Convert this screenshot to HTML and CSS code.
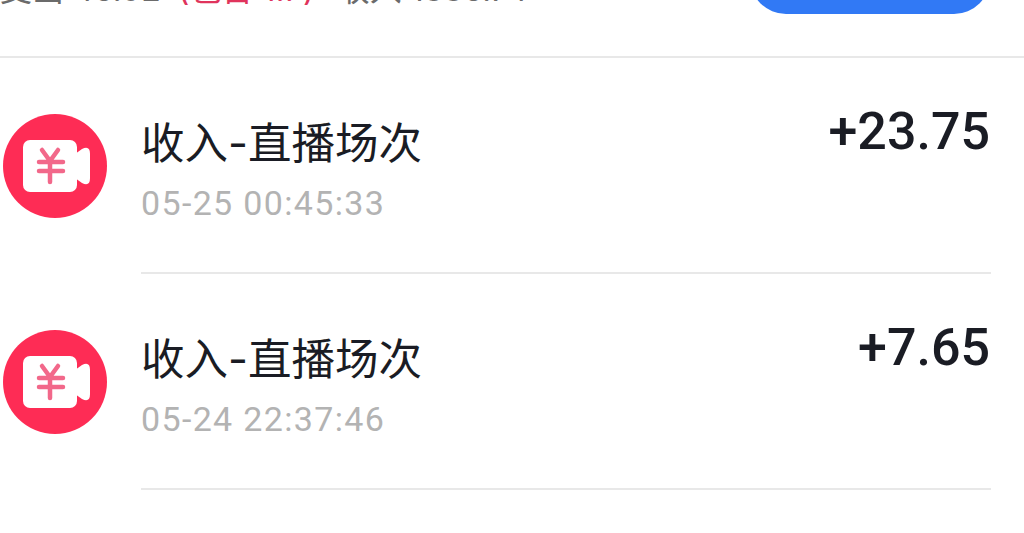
FILE: index.html
```html
<!DOCTYPE html>
<html lang="zh">
<head>
  <meta charset="UTF-8">
  <title>收支明细</title>
  <link rel="stylesheet" href="styles.css">
</head>
<body>

<div class="summary">
  <div class="summary-text">
    <span>支出 46.92</span>
    <span class="refund">(包含 1.. )</span>
    <span class="income">收入 1886.74</span>
  </div>
  <div class="action-btn"></div>
</div>

<div class="record">
  <div class="record-icon">
    <svg width="104" height="104" viewBox="0 0 104 104">
      <circle cx="52" cy="52" r="52" fill="#fe2c55"/>
      <rect x="20" y="26" width="54" height="52" rx="7" fill="#fff"/>
      <path d="M72 40l7-5q8-4 8 5v24q0 9-8 5l-7-5z" fill="#fff"/>
      <path d="M39 36l8 11 8-11M36 48h24M36 57h24M47 48v20" fill="none" stroke="#f2688a" stroke-width="4.5" stroke-linecap="round" stroke-linejoin="round"/>
    </svg>
  </div>
  <div class="record-body">
    <div class="record-info">
      <div class="record-title">收入-直播场次</div>
      <div class="record-time">05-25 00:45:33</div>
    </div>
    <div class="record-amount">+23.75</div>
  </div>
</div>

<div class="record">
  <div class="record-icon">
    <svg width="104" height="104" viewBox="0 0 104 104">
      <circle cx="52" cy="52" r="52" fill="#fe2c55"/>
      <rect x="20" y="26" width="54" height="52" rx="7" fill="#fff"/>
      <path d="M72 40l7-5q8-4 8 5v24q0 9-8 5l-7-5z" fill="#fff"/>
      <path d="M39 36l8 11 8-11M36 48h24M36 57h24M47 48v20" fill="none" stroke="#f2688a" stroke-width="4.5" stroke-linecap="round" stroke-linejoin="round"/>
    </svg>
  </div>
  <div class="record-body">
    <div class="record-info">
      <div class="record-title">收入-直播场次</div>
      <div class="record-time">05-24 22:37:46</div>
    </div>
    <div class="record-amount">+7.65</div>
  </div>
</div>

</body>
</html>
```

FILE: styles.css
```css
* {
  box-sizing: border-box;
  font-family: 'Inter', 'Noto Sans CJK SC', sans-serif;
}

html, body {
  height: 533px;
  overflow: hidden;
}

body {
  margin: 0;
  background: #fff;
}

.summary {
  height: 88px;
  margin-top: -30px;
  padding: 0 34px 0 0;
  border-bottom: 2px solid #e8e8e8;
  display: flex;
  justify-content: space-between;
  align-items: flex-start;
}

.summary-text {
  display: flex;
  gap: 30px;
  font-size: 32px;
  line-height: 40px;
  color: #6b6b6b;
}

.refund {
  color: #e0345c;
  margin-left: -13px;
}

.income {
  margin-left: -7px;
}

.action-btn {
  width: 240px;
  height: 44px;
  background: #3179f5;
  border-radius: 0 0 36px 36px;
}

.record {
  display: flex;
  height: 216px;
  padding: 0 33px 0 3px;
}

.record-icon {
  width: 138px;
  flex: none;
  padding-top: 56px;
}

.record-icon svg {
  display: block;
}

.record-body {
  flex: 1;
  display: flex;
  justify-content: space-between;
  border-bottom: 2px solid #e8e8e8;
}

.record-title {
  margin-top: 61px;
  font-size: 43.5px;
  line-height: 48px;
  color: #1a1c24;
}

.record-time {
  margin-top: 16px;
  font-family: 'Roboto', sans-serif;
  font-size: 34px;
  line-height: 40px;
  letter-spacing: 1.35px;
  color: #b3b3b3;
}

.record-amount {
  margin-top: 44px;
  padding-right: 1px;
  font-family: 'Roboto', sans-serif;
  font-size: 52px;
  line-height: 60px;
  font-weight: 500;
  color: #1a1c24;
}
```
